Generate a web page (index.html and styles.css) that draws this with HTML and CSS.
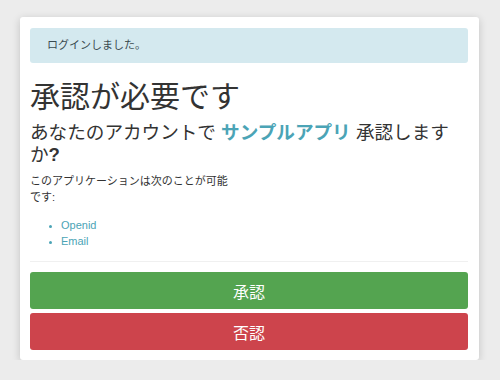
FILE: index.html
```html
<!DOCTYPE html>
<html lang="ja">
<head>
    <meta charset="UTF-8">
    <title>承認が必要です</title>
    <link rel="stylesheet" href="styles.css">
</head>
<body>
    <div class="card">
        <div class="alert">ログインしました。</div>
        <h1>承認が必要です</h1>
        <h3>あなたのアカウントで <span class="app">サンプルアプリ</span> 承認しますか<b>?</b></h3>
        <div class="scope-box">
            <p>このアプリケーションは次のことが可能です:</p>
            <ul>
                <li>Openid</li>
                <li>Email</li>
            </ul>
        </div>
        <hr>
        <button class="btn btn-ok">承認</button>
        <button class="btn btn-ng">否認</button>
    </div>
</body>
</html>
```

FILE: styles.css
```css
* {
    margin: 0;
    padding: 0;
    box-sizing: border-box;
}
body {
    background: #ececec;
    font-family: "Liberation Sans", "Noto Sans CJK JP", sans-serif;
    color: #333;
    padding: 17px 21px 0 20px;
}
.card {
    background: #fff;
    border-radius: 3px;
    box-shadow: 0 2px 8px rgba(0,0,0,.18);
    padding: 11px 11px 11px 10px;
    height: 343px;
}
.alert {
    background: #d4e9ef;
    color: #3a4b50;
    border-radius: 3px;
    font-size: 11px;
    line-height: 15px;
    padding: 10px 17px;
}
h1 {
    font-weight: normal;
    font-size: 30px;
    line-height: 36px;
    margin-top: 16px;
    color: #333;
}
h3 {
    font-weight: normal;
    font-size: 18.6px;
    line-height: 22px;
    margin-top: 7px;
}
h3 .app {
    color: #4ba4b6;
    font-weight: bold;
}
.scope-box {
    width: 204px;
    margin-top: 7px;
}
.scope-box p {
    font-size: 11px;
    line-height: 16px;
}
.scope-box ul {
    margin: 12px 0 0 31px;
    font-size: 11px;
    line-height: 16px;
    color: #4ba4b6;
}
.scope-box ul li::marker {
    font-size: 9px;
}
hr {
    border: 0;
    border-top: 1px solid #f0f0f0;
    margin: 12px 0 10px;
}
.btn {
    display: block;
    width: 100%;
    height: 37px;
    border: 0;
    border-radius: 3px;
    color: #fff;
    font-family: "Liberation Sans", "Noto Sans CJK JP", sans-serif;
    font-size: 16px;
}
.btn-ok {
    background: #54a450;
}
.btn-ng {
    background: #cd444c;
    margin-top: 4px;
}
```
